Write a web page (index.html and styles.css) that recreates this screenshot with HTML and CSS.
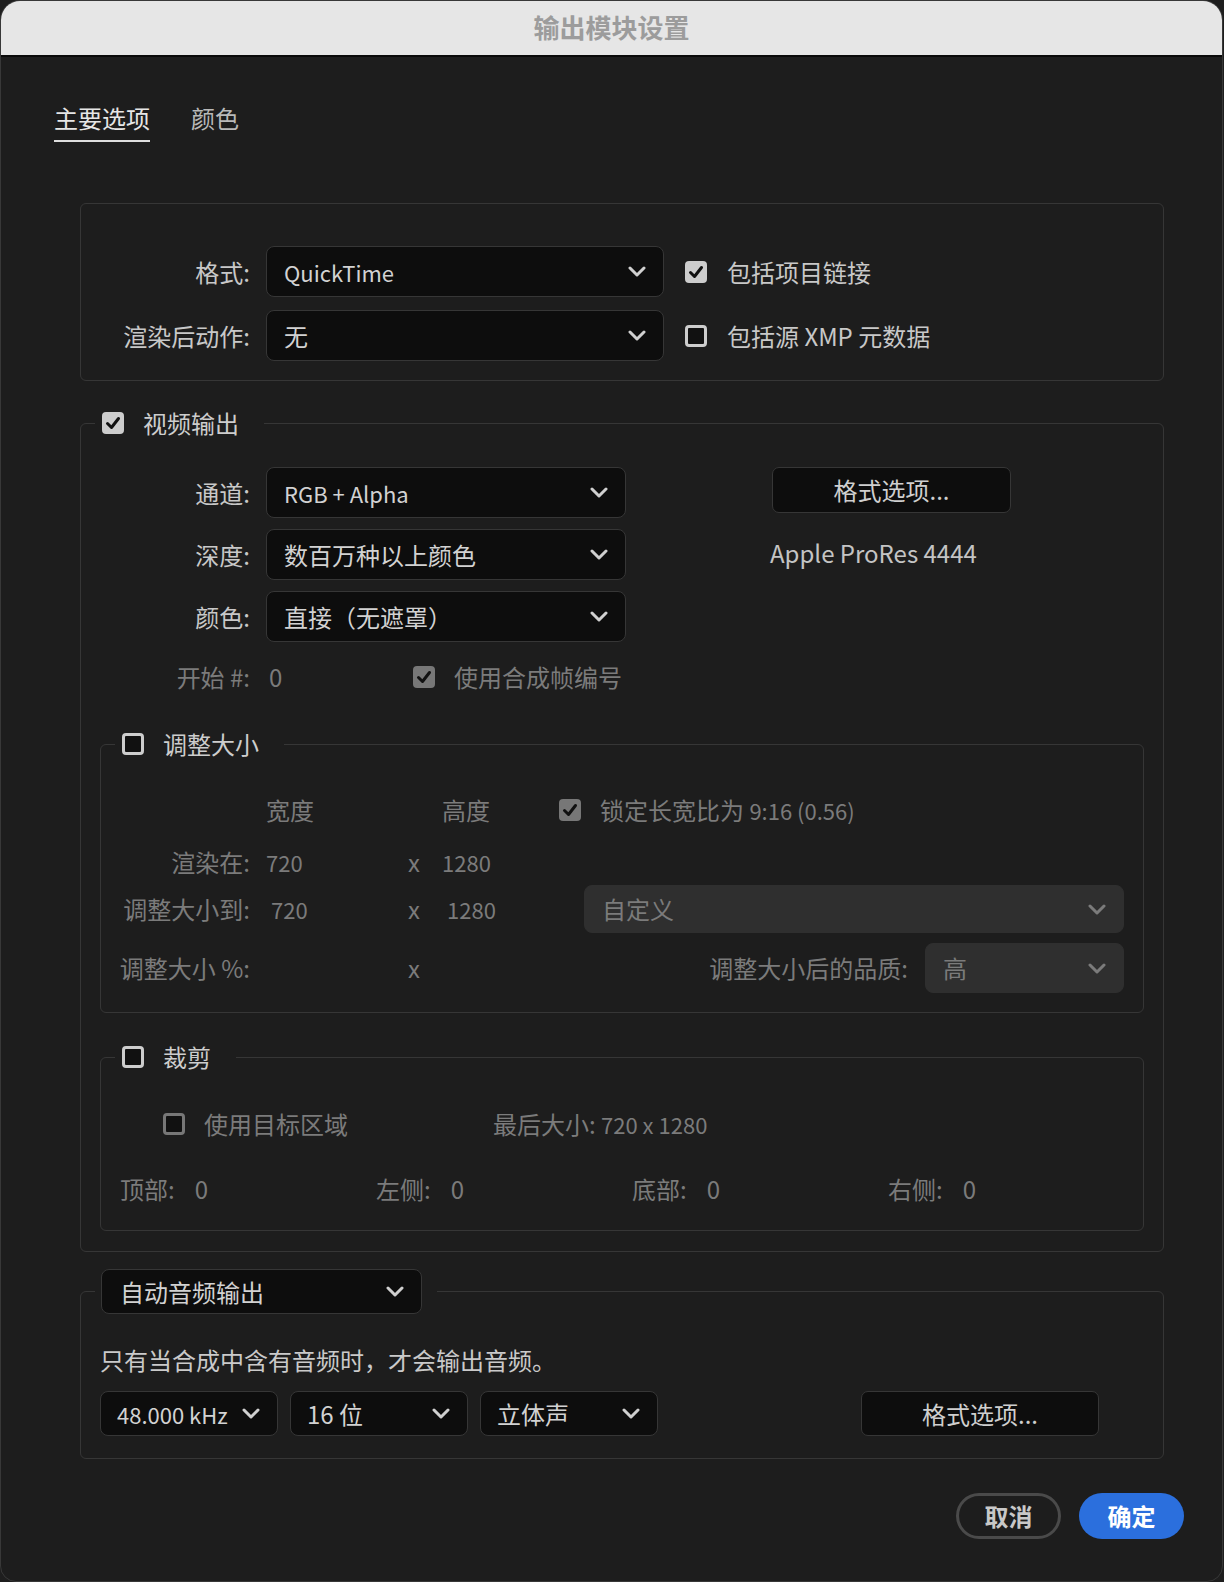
FILE: index.html
```html
<!DOCTYPE html>
<html lang="zh-CN">
<head>
    <meta charset="UTF-8">
    <title>输出模块设置</title>
    <link rel="stylesheet" href="styles.css">
</head>
<body>
    <div class="window">
        <div class="titlebar">输出模块设置</div>
        <div class="content">
            <div class="tabs">
                <div class="tab active">主要选项</div>
                <div class="tab">颜色</div>
            </div>

            <div class="box general">
                <div class="label">格式:</div>
                <div class="select"><span class="lat">QuickTime</span><svg class="chev" viewBox="0 0 18 11"><path d="M2 2 L9 9 L16 2"/></svg></div>
                <div class="check-row"><span class="cb on"><svg viewBox="0 0 22 22"><path d="M5.5 11.5 L9.5 15.5 L16.5 6.5"/></svg></span><span>包括项目链接</span></div>
                <div class="label">渲染后动作:</div>
                <div class="select"><span>无</span><svg class="chev" viewBox="0 0 18 11"><path d="M2 2 L9 9 L16 2"/></svg></div>
                <div class="check-row"><span class="cb"></span><span>包括源 XMP 元数据</span></div>
            </div>

            <fieldset class="group video">
                <legend><span class="cb on"><svg viewBox="0 0 22 22"><path d="M5.5 11.5 L9.5 15.5 L16.5 6.5"/></svg></span><span>视频输出</span></legend>
                <div class="video-top">
                    <div class="video-grid">
                        <div class="label">通道:</div>
                        <div class="select"><span class="lat">RGB + Alpha</span><svg class="chev" viewBox="0 0 18 11"><path d="M2 2 L9 9 L16 2"/></svg></div>
                        <div class="label">深度:</div>
                        <div class="select"><span>数百万种以上颜色</span><svg class="chev" viewBox="0 0 18 11"><path d="M2 2 L9 9 L16 2"/></svg></div>
                        <div class="label">颜色:</div>
                        <div class="select"><span>直接（无遮罩）</span><svg class="chev" viewBox="0 0 18 11"><path d="M2 2 L9 9 L16 2"/></svg></div>
                    </div>
                    <div class="video-side">
                        <div class="btn-dark">格式选项...</div>
                        <div class="codec">Apple ProRes 4444</div>
                    </div>
                </div>
                <div class="start-row dim">
                    <div class="label">开始 #:</div>
                    <div class="start-val">0</div>
                    <div class="check-row"><span class="cb on off"><svg viewBox="0 0 22 22"><path d="M5.5 11.5 L9.5 15.5 L16.5 6.5"/></svg></span><span>使用合成帧编号</span></div>
                </div>

                <fieldset class="group sub resize">
                    <legend><span class="cb"></span><span>调整大小</span></legend>
                    <div class="rs-row head dim">
                        <div class="c-label"></div>
                        <div class="c-w">宽度</div>
                        <div class="c-x"></div>
                        <div class="c-h">高度</div>
                        <div class="check-row"><span class="cb on off"><svg viewBox="0 0 22 22"><path d="M5.5 11.5 L9.5 15.5 L16.5 6.5"/></svg></span><span>锁定长宽比为 <span class="lat">9:16 (0.56)</span></span></div>
                    </div>
                    <div class="rs-row r-b dim">
                        <div class="c-label">渲染在:</div>
                        <div class="c-w lat">720</div>
                        <div class="c-x">x</div>
                        <div class="c-h lat">1280</div>
                    </div>
                    <div class="rs-row r-c dim">
                        <div class="c-label">调整大小到:</div>
                        <div class="c-w shift lat">720</div>
                        <div class="c-x">x</div>
                        <div class="c-h shift lat">1280</div>
                        <div class="select disabled preset"><span>自定义</span><svg class="chev" viewBox="0 0 18 11"><path d="M2 2 L9 9 L16 2"/></svg></div>
                    </div>
                    <div class="rs-row r-d dim">
                        <div class="c-label">调整大小 %:</div>
                        <div class="c-w"></div>
                        <div class="c-x">x</div>
                        <div class="c-h"></div>
                        <div class="quality">
                            <span>调整大小后的品质:</span>
                            <div class="select disabled"><span>高</span><svg class="chev" viewBox="0 0 18 11"><path d="M2 2 L9 9 L16 2"/></svg></div>
                        </div>
                    </div>
                </fieldset>

                <fieldset class="group sub crop">
                    <legend><span class="cb"></span><span>裁剪</span></legend>
                    <div class="crop-row dim">
                        <div class="check-row target"><span class="cb off"></span><span>使用目标区域</span></div>
                        <div>最后大小: <span class="lat">720 x 1280</span></div>
                    </div>
                    <div class="crop-sides dim">
                        <div class="side"><span>顶部:</span><span>0</span></div>
                        <div class="side"><span>左侧:</span><span>0</span></div>
                        <div class="side"><span>底部:</span><span>0</span></div>
                        <div class="side"><span>右侧:</span><span>0</span></div>
                    </div>
                </fieldset>
            </fieldset>

            <fieldset class="group audio">
                <legend><div class="select audio-mode"><span>自动音频输出</span><svg class="chev" viewBox="0 0 18 11"><path d="M2 2 L9 9 L16 2"/></svg></div></legend>
                <div class="audio-body">
                    <div class="audio-note">只有当合成中含有音频时，才会输出音频。</div>
                    <div class="audio-row">
                        <div class="select small"><span class="lat">48.000 kHz</span><svg class="chev" viewBox="0 0 18 11"><path d="M2 2 L9 9 L16 2"/></svg></div>
                        <div class="select small"><span>16 位</span><svg class="chev" viewBox="0 0 18 11"><path d="M2 2 L9 9 L16 2"/></svg></div>
                        <div class="select small"><span>立体声</span><svg class="chev" viewBox="0 0 18 11"><path d="M2 2 L9 9 L16 2"/></svg></div>
                        <div class="btn-dark audio-btn">格式选项...</div>
                    </div>
                </div>
            </fieldset>

            <div class="actions">
                <div class="btn cancel">取消</div>
                <div class="btn ok">确定</div>
            </div>
        </div>
    </div>
</body>
</html>
```

FILE: styles.css
```css
html, body {
    height: 100%;
}

body {
    margin: 0;
    overflow: hidden;
    background-color: #1e1e1e;
    font-family: "Noto Sans CJK SC", "Noto Sans", sans-serif;
    font-size: 24px;
    line-height: 32px;
    color: #c8c8c8;
}

.lat {
    font-size: 22px;
}

.window {
    box-sizing: border-box;
    height: 100%;
    margin-right: 1px;
    background-color: #1d1d1d;
    border: 1px solid #383838;
    border-radius: 20px 20px 16px 16px;
    overflow: hidden;
}

.titlebar {
    height: 54px;
    line-height: 52px;
    background-color: #e6e6e6;
    border-bottom: 2px solid #0a0a0a;
    text-align: center;
    font-size: 26px;
    font-weight: 700;
    color: #9c9c9c;
}

.content {
    padding: 0 58px 0 79px;
}

/* tabs */
.tabs {
    display: flex;
    gap: 41px;
    margin: 45px 0 0 -26px;
}

.tab {
    padding-bottom: 6px;
    color: #b9b9b9;
    border-bottom: 2px solid transparent;
}

.tab.active {
    color: #e6e6e6;
    border-bottom-color: #dedede;
}

/* shared pieces */
.label {
    text-align: right;
    white-space: nowrap;
}

.dim {
    color: #7b7b7b;
}

.select {
    box-sizing: border-box;
    height: 51px;
    display: flex;
    align-items: center;
    justify-content: space-between;
    padding: 0 17px;
    background-color: #0d0d0d;
    border: 1px solid #363636;
    border-radius: 8px;
    color: #d2d2d2;
    white-space: nowrap;
}

.chev {
    width: 18px;
    height: 11px;
    flex-shrink: 0;
}

.chev path {
    fill: none;
    stroke: #d0d0d0;
    stroke-width: 3;
    stroke-linecap: round;
    stroke-linejoin: round;
}

.select.disabled {
    background-color: #2f2f2f;
    border-color: #2f2f2f;
    color: #7b7b7b;
}

.select.disabled .chev path {
    stroke: #7b7b7b;
}

.cb {
    box-sizing: border-box;
    width: 22px;
    height: 22px;
    flex-shrink: 0;
    border: 3px solid #cdcdcd;
    border-radius: 4px;
    background-color: #111;
}

.cb.on {
    border: none;
    background-color: #cdcdcd;
}

.cb.off {
    border-color: #777;
}

.cb.on.off {
    background-color: #777;
}

.cb svg {
    display: block;
    width: 22px;
    height: 22px;
}

.cb path {
    fill: none;
    stroke: #111;
    stroke-width: 3;
    stroke-linecap: round;
    stroke-linejoin: round;
}

.check-row {
    display: flex;
    align-items: center;
    gap: 19px;
    white-space: nowrap;
}

.btn-dark {
    box-sizing: border-box;
    height: 46px;
    line-height: 44px;
    text-align: center;
    background-color: #0d0d0d;
    border: 1px solid #363636;
    border-radius: 7px;
    color: #cfcfcf;
}

/* general box */
.box {
    margin-top: 61px;
    border: 1px solid #363636;
    border-radius: 6px;
}

.general {
    display: grid;
    grid-template-columns: 169px 398px 1fr;
    column-gap: 16px;
    row-gap: 13px;
    align-items: center;
    padding: 42px 0 19px;
}

.general .check-row {
    gap: 20px;
    padding-left: 5px;
}

/* fieldsets */
.group {
    margin: 0;
    padding: 0;
    min-width: 0;
    border: 1px solid #363636;
    border-radius: 6px;
}

.group legend {
    display: flex;
    align-items: center;
    gap: 19px;
    height: 32px;
    margin-left: 14px;
    padding: 0 25px 0 7px;
    color: #cdcdcd;
}

.video {
    margin-top: 26px;
    padding: 28px 0 20px;
}

.video-top {
    display: flex;
}

.video-grid {
    display: grid;
    grid-template-columns: 169px 360px;
    column-gap: 16px;
    row-gap: 11px;
    align-items: center;
}

.video-side {
    margin-left: 146px;
    width: 239px;
}

.codec {
    margin-top: 24px;
    padding-left: 0;
    margin-left: -2px;
    color: #c4c4c4;
    white-space: nowrap;
}

.start-row {
    display: flex;
    align-items: center;
    margin-top: 19px;
}

.start-row .label {
    width: 169px;
}

.start-val {
    box-sizing: border-box;
    width: 163px;
    padding-left: 19px;
}

.sub {
    margin: 0 19px;
}

.resize {
    margin-top: 35px;
    padding-bottom: 19px;
}

.rs-row {
    display: flex;
    align-items: center;
}

.rs-row.head {
    height: 32px;
    margin-top: 34px;
}

.rs-row.r-b {
    height: 32px;
    margin-top: 20px;
}

.rs-row.r-c {
    height: 48px;
    margin-top: 7px;
}

.rs-row.r-d {
    height: 50px;
    margin-top: 10px;
}

.c-label {
    width: 149px;
    text-align: right;
    white-space: nowrap;
    flex-shrink: 0;
}

.c-w {
    box-sizing: border-box;
    width: 158px;
    padding-left: 16px;
    flex-shrink: 0;
}

.c-x {
    width: 34px;
    flex-shrink: 0;
}

.c-h {
    box-sizing: border-box;
    width: 117px;
    flex-shrink: 0;
}

.c-w.shift {
    padding-left: 21px;
}

.c-h.shift {
    padding-left: 5px;
}

.preset {
    flex: 1;
    height: 48px;
    margin: 0 19px 0 25px;
}

.quality {
    flex: 1;
    display: flex;
    align-items: center;
    justify-content: flex-end;
    gap: 17px;
    margin-right: 19px;
    white-space: nowrap;
}

.quality .select {
    width: 199px;
    height: 50px;
}

.crop {
    margin-top: 28px;
    padding: 35px 0 25px;
}

.crop-row {
    display: flex;
    align-items: center;
    padding-left: 62px;
    white-space: nowrap;
}

.crop-row .target {
    width: 330px;
}

.crop-sides {
    display: grid;
    grid-template-columns: 256px 256px 256px 1fr;
    margin-top: 33px;
    padding-left: 19px;
}

.side {
    display: flex;
    gap: 20px;
}

/* audio */
.audio {
    margin-top: 17px;
}

.audio legend {
    height: 45px;
    padding: 0 15px 0 6px;
}

.audio-mode {
    width: 321px;
    height: 45px;
    padding: 0 17px 0 18px;
}

.audio-body {
    padding: 30px 19px 22px;
}

.audio-note {
    color: #cacaca;
}

.audio-row {
    display: flex;
    gap: 12px;
    margin-top: 15px;
}

.select.small {
    width: 178px;
    height: 45px;
    padding: 0 17px 0 16px;
}

.audio-btn {
    width: 238px;
    height: 45px;
    margin-left: 191px;
}

/* bottom buttons */
.actions {
    display: flex;
    justify-content: flex-end;
    gap: 18px;
    margin: 34px -20px 0 0;
}

.btn {
    box-sizing: border-box;
    width: 105px;
    height: 46px;
    border-radius: 23px;
    text-align: center;
    font-weight: 700;
}

.btn.cancel {
    line-height: 40px;
    border: 3px solid #4a4a4a;
    color: #c8c8c8;
}

.btn.ok {
    line-height: 46px;
    background-color: #2b6fdd;
    color: #fff;
}
```
